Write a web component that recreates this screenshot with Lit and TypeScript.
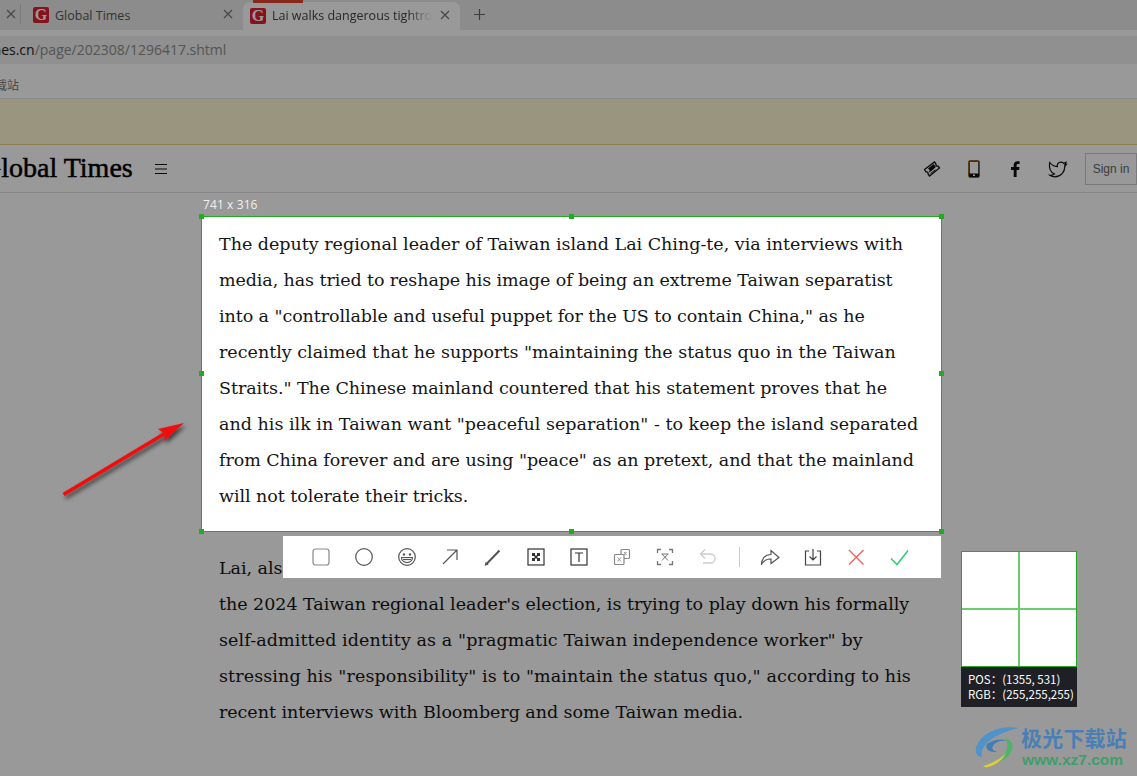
import { LitElement, html, css, svg } from "lit";
import { customElement } from "lit/decorators.js";

// Each line: its text and the letter-spacing that fits it to the reference's measure.
const P1: [string, number][] = [
  ["The deputy regional leader of Taiwan island Lai Ching-te, via interviews with", -0.01],
  ["media, has tried to reshape his image of being an extreme Taiwan separatist", -0.1],
  ['into a "controllable and useful puppet for the US to contain China," as he', -0.08],
  ['recently claimed that he supports "maintaining the status quo in the Taiwan', 0],
  ['Straits." The Chinese mainland countered that his statement proves that he', -0.07],
  ['and his ilk in Taiwan want "peaceful separation" - to keep the island separated', 0.01],
  ['from China forever and are using "peace" as an pretext, and that the mainland', -0.065],
  ["will not tolerate their tricks.", -0.06],
];
const P2: [string, number][] = [
  ["Lai, also a candidate of the Democratic Progressive Party for", -0.05],
  ["the 2024 Taiwan regional leader's election, is trying to play down his formally", -0.03],
  ['self-admitted identity as a "pragmatic Taiwan independence worker" by', 0.1],
  ['stressing his "responsibility" is to "maintain the status quo," according to his', 0.11],
  ["recent interviews with Bloomberg and some Taiwan media.", -0.05],
];
const line = ([t, s]: [string, number]) => html`<div style="letter-spacing:${s}px">${t}</div>`;

const ic = (body: unknown, extra = "") => html`<svg class="ic ${extra}" viewBox="0 0 22 22" width="22" height="22" fill="none" stroke="currentColor" stroke-width="1.2">${body}</svg>`;

const gLogo = html`<span class="g">G</span>`;

@customElement("app-root")
export class AppRoot extends LitElement {
  static styles = css`
    :host { display: block; position: relative; width: 1137px; height: 776px; overflow: hidden; background: #fff; font-family: "Liberation Sans", sans-serif; }
    .page { display: flex; flex-direction: column; height: 776px; }
    .tabs { height: 30px; background: #e9e9e9; display: flex; align-items: stretch; position: relative; flex: none; }
    .tab { display: flex; align-items: center; font: 12.5px "Open Sans", sans-serif; color: #555; }
    .tab0 { border-right: 1px solid #ccc; margin: 4px 0 6px; justify-content: flex-start; padding-left: 6px; width: 14px; }
    .tab1 { width: 222px; padding-left: 12px; box-sizing: border-box; }
    .tab2 { width: 217px; margin-top: 2px; background: #fff; border-radius: 7px 7px 0 0; padding-left: 7px; box-sizing: border-box; color: #444; position: relative; }
    .tab2::before { content: ""; position: absolute; left: 10px; top: -2px; width: 50px; height: 3px; background: #e0452f; }
    .g { width: 16px; height: 16px; background: #e02030; border-radius: 2px; color: #fff; font: bold 16px/16px "Liberation Serif", serif; text-align: center; flex: none; }
    .label { margin-left: 6px; flex: 1; white-space: nowrap; overflow: hidden; }
    .tab2 .label { margin-top: -2px; -webkit-mask-image: linear-gradient(90deg, #000 85%, transparent); mask-image: linear-gradient(90deg, #000 85%, transparent); }
    .x { width: 10px; height: 10px; margin: 0 10px 0 8px; color: #777; flex: none; margin-top: -3px; }
    .tab0 .x { margin: 0; }
    .plus { width: 13px; height: 13px; margin: 8px 0 0 13px; color: #666; }
    .addr { height: 34px; background: #fff; padding-top: 6px; box-sizing: border-box; flex: none; display: flex; }
    .field { flex: 1; background: #f0f0f0; font: 14px/27px "Open Sans", sans-serif; color: #8c8c8c; white-space: nowrap; overflow: hidden; }
    .field span { display: inline-block; margin-left: -96px; }
    .field b { font-weight: 400; color: #222; }
    .bm { height: 35px; flex: none; font: 12px/41px "Noto Sans CJK SC", sans-serif; color: #777; white-space: nowrap; overflow: hidden; background: #fff; border-bottom: 1px solid #e4e4e4; box-sizing: border-box; }
    .bm span { display: inline-block; margin-left: -17px; }
    .notice { height: 46px; flex: none; background: #fff8d4; border-bottom: 1px solid #e9d47e; box-sizing: border-box; }
    .site { height: 48px; flex: none; display: flex; align-items: center; border-bottom: 1px solid #e0e0e0; box-sizing: border-box; }
    .logo { font: 400 28px "Liberation Serif", serif; color: #000; margin-left: -19px; white-space: nowrap; -webkit-text-stroke: .5px #000; margin-top: -2px; }
    .burger { width: 12px; height: 12px; margin-left: 22px; color: #111; }
    .social { margin-left: auto; display: flex; align-items: center; }
    .sicon { width: 20px; height: 20px; margin-right: 22px; display: block; }
    .sicon.last { margin-right: 0; }
    .sicon.fb { margin-left: -1px; margin-right: 23px; }
    .spacer { width: 21px; }
    .signin { width: 52px; height: 32px; margin-left: -4px; border: 1px solid #ccc; box-sizing: border-box; font-size: 12px; color: #666; display: flex; align-items: center; justify-content: center; }
    .text { font: 17.5px/36px "DejaVu Serif", serif; color: #151515; white-space: nowrap; }
    .text div { height: 36px; }
    .article { padding: 33px 0 0 219px; }
    .article .gap { height: 36px; }
    .dim { position: absolute; inset: 0; background: rgba(0,0,0,.4); }
    .sel { position: absolute; left: 201px; top: 216px; width: 741px; height: 316px; box-sizing: border-box; border: 1px solid #22aa22; background: #fff; padding: 9px 0 0 17px; }
    .h { position: absolute; width: 5px; height: 5px; background: #22aa22; }
    .size { position: absolute; left: 203px; top: 196px; font: 12px "Open Sans", sans-serif; color: #f0f0f0; letter-spacing: .1px; }
    .bar { position: absolute; left: 283px; top: 536px; width: 658px; height: 42px; background: #fff; display: flex; align-items: center; padding-left: 27px; box-sizing: border-box; gap: 21px; color: #555; }
    .ic { flex: none; display: block; }
    .sep { width: 1px; height: 20px; background: #ccc; margin: 0 -2px 0 -1px; flex: none; }
    .mag { position: absolute; left: 961px; top: 551px; width: 116px; }
    .lens { height: 116px; box-sizing: border-box; border: 1px solid #22aa22; background: #fff; display: grid; grid-template-columns: 56px 2px 56px; grid-template-rows: 56px 2px 56px; }
    .lens i { background: #6ecb6e; }
    .lens .v { grid-column: 2; grid-row: 1 / 4; }
    .lens .hz { grid-column: 1 / 4; grid-row: 2; }
    .info { height: 40px; background: #1f2025; color: #fff; font: 11.5px/15px "Noto Sans CJK SC", sans-serif; padding: 5px 0 0 7px; box-sizing: border-box; white-space: nowrap; }
    .arrow { position: absolute; left: 50px; top: 410px; }
    .wm { position: absolute; left: 975px; top: 724px; width: 160px; height: 48px; }
    .wm svg { position: absolute; left: 0; top: 2px; }
    .wm .cn { position: absolute; left: 46px; top: 0; font: 700 21px/26px "Noto Sans CJK SC", sans-serif; color: #4a7fb5; letter-spacing: .2px; white-space: nowrap; }
    .wm .en { position: absolute; left: 47px; top: 27px; font: 700 15.5px/18px "Liberation Sans", sans-serif; color: #3f9e6a; white-space: nowrap; }
  `;

  render() {
    const closeX = html`<svg class="x" viewBox="0 0 10 10" stroke="currentColor" stroke-width="1.2"><path d="M1 1l8 8M9 1l-8 8"/></svg>`;
    const handles = [[-3, -3], [367, -3], [737, -3], [-3, 154], [737, 154], [-3, 312], [367, 312], [737, 312]];
    return html`
      <div class="page">
        <div class="tabs">
          <div class="tab tab0">${closeX}</div>
          <div class="tab tab1">${gLogo}<span class="label">Global Times</span>${closeX}</div>
          <div class="tab tab2">${gLogo}<span class="label">Lai walks dangerous tightrope</span>${closeX}</div>
          <svg class="plus" viewBox="0 0 13 13" stroke="currentColor" stroke-width="1.2"><path d="M6.5 1v11M1 6.5h11"/></svg>
        </div>
        <div class="addr"><div class="field"><span><b>www.globaltimes.cn</b>/page/202308/1296417.shtml</span></div></div>
        <div class="bm"><span>下载站</span></div>
        <div class="notice"></div>
        <div class="site">
          <span class="logo">Global Times</span>
          <svg class="burger" viewBox="0 0 12 12" stroke="currentColor" stroke-width="1.2"><path d="M0 1.5h12M0 6h12M0 10.5h12"/></svg>
          <div class="social">
            <svg class="sicon" viewBox="0 0 20 20" fill="none" stroke="#111" stroke-width="1.3"><path d="M2.5 10.5 12.5 3 l1.5 2 a1.5 1.5 0 0 0 2 2 l1.5 2 L7.5 17 l-1.5-2 a1.5 1.5 0 0 0-2-2z" fill="#fff"/><path d="M7 9.5l4.5-3.5 1.5 2-4.5 3.5z" fill="#111"/><path d="M7 13l5-3.700M8.500 14.500l5-3.700" stroke-width="1"/></svg>
            <svg class="sicon" viewBox="0 0 20 20" fill="none"><rect x="4.6" y="1.6" width="10.8" height="16.8" rx="1.5" stroke="#c98a2a" stroke-width="1.2"/><rect x="5.2" y="2.2" width="9.6" height="15.6" rx="1" stroke="#111" stroke-width="1"/><rect x="5" y="14.5" width="10" height="3.5" fill="#111"/><rect x="9" y="15.5" width="2" height="1.5" fill="#fff"/></svg>
            <svg class="sicon fb" viewBox="0 0 20 20"><path d="M11.6 18V11h2.5l.4-2.9h-2.9V6.3c0-.8.3-1.4 1.5-1.4h1.5V2.3c-.3 0-1.2-.1-2.2-.1-2.2 0-3.7 1.3-3.7 3.8v2.1H6V11h2.7v7z" fill="#111"/></svg>
            <svg class="sicon last" viewBox="0 0 20 20" fill="none" stroke="#111" stroke-width="1.2"><path d="M1.800 3.500c2 2.600 4.400 4 7.500 4.200-.4-2.600 1.300-4.600 3.600-4.600 1.200 0 2.100.5 2.700 1.200l2.400-.9-1.100 2.200 1.600-.3c-.5.8-1 1.400-1.700 1.900.2 5.700-4.200 10.600-9.800 10.600-1.900 0-3.600-.5-5.100-1.500 1.700.1 3.200-.4 4.500-1.300-3.900-1.600-5.800-6.300-4.600-11.500z"/></svg>
            <div class="spacer"></div>
            <div class="signin">Sign in</div>
          </div>
        </div>
        <div class="article text">
          ${P1.map(line)}
          <div class="gap"></div>
          ${P2.map(line)}
        </div>
      </div>
      <div class="dim"></div>
      <div class="size">741 x 316</div>
      <div class="sel text">
        ${P1.map(line)}
        ${handles.map(([x, y]) => html`<span class="h" style="left:${x}px;top:${y}px"></span>`)}
      </div>
      <svg class="arrow" width="150" height="100" viewBox="50 410 150 100">
        <defs><filter id="s" x="-20%" y="-20%" width="150%" height="150%"><feDropShadow dx="2" dy="3" stdDeviation="2" flood-color="#000" flood-opacity=".6"/></filter></defs>
        <path d="M62.500 493 L163 432.500 L158 429 L184 423 L164 441 L165 435.500 L64.500 496z" fill="#f01010" filter="url(#s)"/>
      </svg>
      <div class="bar">
        ${ic(svg`<rect x="3" y="3" width="16" height="16" rx="2.500" stroke="#888"/>`)}
        ${ic(svg`<circle cx="11" cy="11" r="8.300" stroke="#555"/>`)}
        ${ic(svg`<circle cx="11" cy="11" r="8.300"/><circle cx="8" cy="8.500" r="1.200" fill="currentColor" stroke="none"/><circle cx="14" cy="8.500" r="1.200" fill="currentColor" stroke="none"/><path d="M5.500 11.500h11c0 3-2.500 5-5.500 5s-5.500-2-5.500-5z"/><path d="M7 13.500h8"/>`)}
        ${ic(svg`<path d="M4 18 18 4M8 4h10v10"/>`)}
        ${ic(svg`<path d="M4 18.500 17.500 4.500" stroke-width="2"/><path d="M3.500 19l2-.5-1.500-1.500z" fill="currentColor"/>`)}
        ${ic(svg`<rect x="3" y="3" width="16" height="16" stroke="#333"/><path d="M7 7h3v3H7zM12 7h3v3h-3zM9.500 9.500h3v3h-3zM7 12h3v3H7zM12 12h3v3h-3z" fill="#333" stroke="none"/>`)}
        ${ic(svg`<rect x="3" y="3" width="16" height="16" stroke="#333"/><path d="M7 7h8M11 7v9" stroke="#333"/>`)}
        ${ic(svg`<rect x="10" y="3.500" width="8.500" height="9" rx="1" stroke="#888"/><rect x="3.500" y="8.500" width="9.500" height="10" rx="1" fill="#fff" stroke="#888"/><path d="M6.500 11.500l3.500 4M10 11.500l-3.500 4" stroke="#888" stroke-width=".9"/><path d="M13 6l2.500 3M15.500 6 13 9" stroke="#888" stroke-width=".9"/>`)}
        ${ic(svg`<path d="M3.500 7V3.500H7M15 3.500h3.500V7M18.500 15v3.500H15M7 18.500H3.500V15" stroke="#777" stroke-width="1.300"/><path d="M8 8l6 6.500M14 8l-6 6.500M7.500 8h7" stroke="#777" stroke-width="1"/>`)}
        ${ic(svg`<path d="M8 3.500 3.500 8l4.500 4.500M3.500 8h10a4.500 4.500 0 0 1 0 9H6" stroke="#ccc" stroke-width="1.300"/>`)}
        <span class="sep"></span>
        ${ic(svg`<path d="M2.500 19c0-6.500 3.500-10.500 9.500-10.500V4.500l8 7-8 6v-4.500c-4.500 0-7.500 1.500-9.500 5.500z" stroke="#555"/>`)}
        ${ic(svg`<path d="M7 5H3.500v14h15V5H15M11 3v11M7.500 10.500 11 14l3.500-3.500" stroke="#444" stroke-width="1.200"/>`)}
        ${ic(svg`<path d="M4 4l14.500 14.500M18.500 4 4 18.500" stroke="#f06060" stroke-width="1.400"/>`)}
        ${ic(svg`<path d="M3 12.500l6 6L20 4.500" stroke="#2ecc71" stroke-width="1.500"/>`)}
      </div>
      <div class="mag">
        <div class="lens"><i class="v"></i><i class="hz"></i></div>
        <div class="info">POS：(1355, 531)<br />RGB：(255,255,255)</div>
      </div>
      <div class="wm">
        <svg width="48" height="44" viewBox="0 0 48 44" fill="none">
          <path d="M44 2C26-1 6 6 1 22c-1 6 2 9 6 9C4 22 16 8 44 2z" fill="#4f93c9"/>
          <path d="M12 18c6-4 14-6 20-3-6-1-12 1-14 5-2 3 1 6 5 5-7 3-14-2-11-7z" fill="#3f7fb8"/>
          <path d="M30 12c8 2 10 10 4 17-5 6-15 9-26 11 12-4 20-8 23-14 2-5 2-10-1-14z" fill="#4fb36a"/>
          <path d="M31 27c-5 6-14 10-23 13 2 1 3 2 5 1 8-2 15-7 18-14z" fill="#d8cf3a"/>
        </svg>
        <span class="cn">极光下载站</span>
        <span class="en">www.xz7.com</span>
      </div>
    `;
  }
}
